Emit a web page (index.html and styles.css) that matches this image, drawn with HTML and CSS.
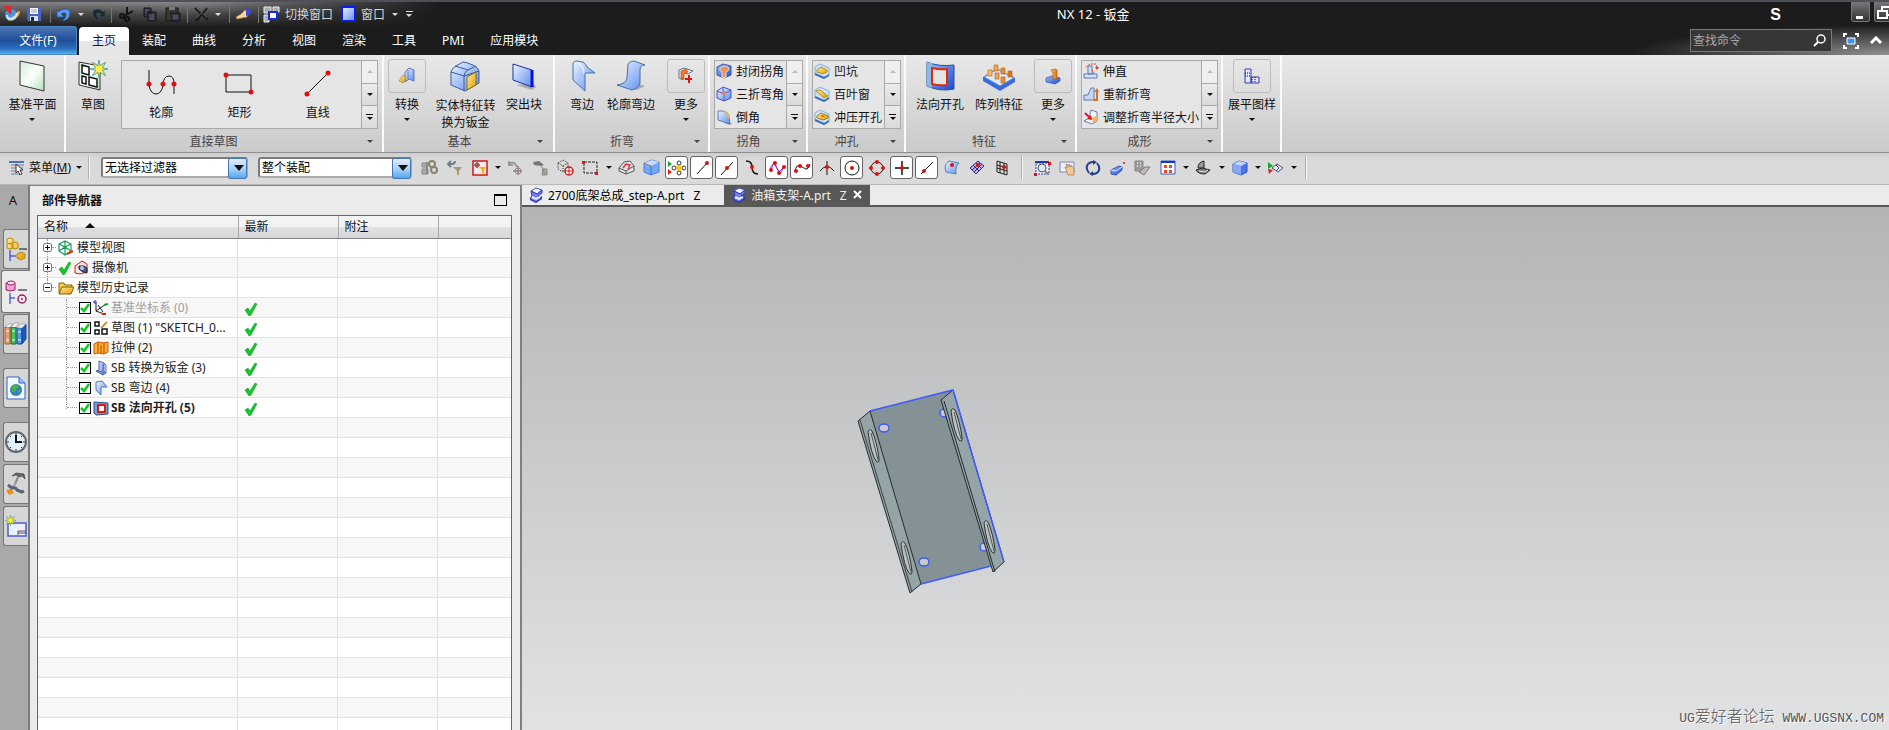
FILE: index.html
```html
<!DOCTYPE html>
<html lang="zh-CN">
<head>
  <meta charset="UTF-8">
  <meta name="viewport" content="width=device-width, initial-scale=1.0">
  <title>NX 12 - 钣金</title>
  <link rel="stylesheet" href="styles.css">
</head>
<body>
  <!-- shared gradients and symbols -->
  <svg class="defs" width="0" height="0" aria-hidden="true">
    <defs>
      <linearGradient id="blue" x1="0" y1="0" x2="1" y2="1"><stop offset="0" stop-color="#eef5ff"/><stop offset="1" stop-color="#5b8cf0"/></linearGradient>
      <linearGradient id="deep" x1="0" y1="0" x2="1" y2="1"><stop offset="0" stop-color="#9cc0ff"/><stop offset="1" stop-color="#1f49c8"/></linearGradient>
      <linearGradient id="gold" x1="0" y1="0" x2="1" y2="1"><stop offset="0" stop-color="#fff0a0"/><stop offset="1" stop-color="#e59a00"/></linearGradient>
      <linearGradient id="orange" x1="0" y1="0" x2="1" y2="0"><stop offset="0" stop-color="#ffc46a"/><stop offset="1" stop-color="#d9720c"/></linearGradient>
      <linearGradient id="pale" x1="0" y1="0" x2="1" y2="1"><stop offset="0" stop-color="#d3ecd8"/><stop offset=".5" stop-color="#fbfffb"/><stop offset="1" stop-color="#b5dfbd"/></linearGradient>
      <symbol id="check" viewBox="0 0 14 14"><path d="M1 8l3-2 2 3 5-8 2 1-6 11-2 1z" fill="#16c22c" stroke="#0b9a1d" stroke-width=".5"/></symbol>
      <symbol id="part" viewBox="0 0 16 16"><path d="M2 10l6 3 6-4v3l-6 4-6-3z" fill="#2b35b4"/><path d="M3 4l5-3 6 2-5 4z" fill="#f2f4ff" stroke="#4a55e0"/><path d="M3 4l6 3 5-4v3l-4 3 3 2-5 4-6-3 2-3z" fill="#7583ea" stroke="#3138c0"/><path d="M4 10l4 2 4-2" fill="none" stroke="#e6eaff" stroke-width="2"/></symbol>
      <symbol id="star" viewBox="0 0 16 16"><path d="M8 0l1 5 5-3-3 5 5 1-5 1 3 5-5-3-1 5-1-5-5 3 3-5-5-1 5-1-3-5 5 3z" fill="#ffef3c" stroke="#3b8fa8" stroke-width=".7"/></symbol>
    </defs>
  </svg>

  <header class="titlebar">
    <div class="quick-access">
      <button class="qa" aria-label="NX"><svg width="17" height="17" viewBox="0 0 17 17"><circle cx="8" cy="9" r="6" fill="#3f9be8"/><path d="M5 13q9 0 11-8" fill="none" stroke="#f59c1a" stroke-width="3"/><path d="M4 9q0 4 4 4 5-1 6-6" fill="none" stroke="#d6efff" stroke-width="2"/><path d="M1 0h8l-1 9-3-3z" fill="#e3262c"/></svg></button>
      <button class="qa qa-save" aria-label="保存"><svg width="15" height="15" viewBox="0 0 15 15"><path d="M0 1h14v13H1l-1-1z" fill="#4a62c0"/><path d="M3 1h8v6H3z" fill="#fff"/><path d="M4 3h6M4 5h6" stroke="#99a"/><path d="M3 9h8v5H3z" fill="#d8deee"/><path d="M4 10h3v4H4z" fill="#224"/></svg></button>
      <i class="qa-sep"></i>
      <button class="qa" aria-label="撤销"><svg width="16" height="15" viewBox="0 0 16 15"><path d="M1 3v7h7L5 7q5-3 5 1 0 3-4 6 8-1 8-8 0-4-5-4-4 0-6 3z" fill="#5b9cf0" stroke="#1d4c9e" stroke-width=".7"/></svg></button>
      <button class="drop light" aria-label="撤销列表"></button>
      <button class="qa" aria-label="重做"><svg width="15" height="15" viewBox="0 0 16 15"><path d="M15 3v7H8l3-3Q6 4 6 8q0 3 4 6-8-1-8-8 0-4 5-4 4 0 6 3z" fill="#182830" stroke="#3c4c54" stroke-width=".7"/></svg></button>
      <i class="qa-sep"></i>
      <button class="qa qa-wide" aria-label="剪切"><svg width="15" height="15" viewBox="0 0 15 15"><path d="M8 0v7M14 4L5 9" stroke="#141414" stroke-width="2"/><circle cx="3" cy="9" r="2" fill="none" stroke="#111" stroke-width="2"/><circle cx="8" cy="12" r="2" fill="none" stroke="#111" stroke-width="2"/></svg></button>
      <button class="qa qa-wide" aria-label="复制"><svg width="14" height="15" viewBox="0 0 14 15"><path d="M1 1h7v9H1zM5 5h8v9H5z" fill="#34343f" stroke="#141420"/><path d="M2 3h4M2 5h2M6 8h5M6 10h5M6 12h5" stroke="#66667a"/></svg></button>
      <button class="qa qa-wide" aria-label="粘贴"><svg width="16" height="15" viewBox="0 0 16 15"><path d="M1 1h12v13H1z" fill="#3a372e" stroke="#15140f"/><path d="M4 0h6v3H4z" fill="#777"/><path d="M6 6h9v8H6z" fill="#34343f" stroke="#141420"/><path d="M8 9h5M8 11h5" stroke="#66667a"/></svg></button>
      <i class="qa-sep"></i>
      <button class="qa" aria-label="删除"><svg width="15" height="15" viewBox="0 0 15 15"><path d="M1 1l13 12M13 1L2 14" stroke="#151515" stroke-width="2"/><path d="M2 1l11 10M12 1L3 11" stroke="#666" stroke-width=".7"/></svg></button>
      <button class="drop light" aria-label="删除选项"></button>
      <i class="qa-sep roomy"></i>
      <button class="qa" aria-label="触控模式"><svg width="16" height="12" viewBox="0 0 16 12"><path d="M0 9l5-3 4-4 4 2-2 5-5 1-5 1z" fill="#f5d5a5" stroke="#a9702c" stroke-width=".6"/><path d="M10 0l5 2-1 5-4 1z" fill="#4048d0"/></svg></button>
      <i class="qa-sep roomy"></i>
      <button class="qa-text"><svg width="17" height="17" viewBox="0 0 17 17"><path d="M1 1h7v6H1zM10 1h6v5h-6zM1 9h5v7H1z" fill="#aaa" stroke="#eee"/><path d="M6 6h8v7H6z" fill="#fff" stroke="#1626ea" stroke-width="2"/></svg>切换窗口</button>
      <button class="qa-text"><svg width="15" height="16" viewBox="0 0 15 16"><path d="M1 1h13v14H1z" fill="url(#blue)" stroke="#0a1cf0" stroke-width="2"/></svg>窗口</button>
      <button class="drop light" aria-label="窗口列表"></button>
      <button class="drop bar light" aria-label="自定义工具条"></button>
    </div>
    <h1>NX 12 - 钣金</h1>
    <strong class="badge-s">S</strong>
    <div class="win-buttons">
      <button aria-label="最小化"><svg width="18" height="18" viewBox="0 0 18 18"><path d="M4 13h7v3H4z" fill="#fff"/></svg></button>
      <button aria-label="还原"><svg width="18" height="18" viewBox="0 0 18 18"><path d="M7 8V4h8v8h-3M3 8h9v7H3z" fill="none" stroke="#fff" stroke-width="2"/></svg></button>
    </div>
  </header>

  <nav class="tabs">
    <a href="#" class="file-tab">文件(F)</a>
    <a href="#" class="tab active">主页</a>
    <a href="#" class="tab">装配</a>
    <a href="#" class="tab">曲线</a>
    <a href="#" class="tab">分析</a>
    <a href="#" class="tab">视图</a>
    <a href="#" class="tab">渲染</a>
    <a href="#" class="tab">工具</a>
    <a href="#" class="tab">PMI</a>
    <a href="#" class="tab">应用模块</a>
    <div class="tab-tools">
      <label class="search">
        <input type="text" placeholder="查找命令" aria-label="查找命令">
        <svg width="13" height="13" viewBox="0 0 13 13"><circle cx="8" cy="5" r="4" fill="none" stroke="#fff" stroke-width="1.5"/><path d="M5 8l-4 4" stroke="#fff" stroke-width="2"/></svg>
      </label>
      <button aria-label="全屏"><svg width="16" height="16" viewBox="0 0 16 16"><path d="M1 4V1h3M12 1h3v3M15 12v3h-3M4 15H1v-3" fill="none" stroke="#fff" stroke-width="2"/><path d="M4 5h8v6H4z" fill="#3f92ee" stroke="#fff"/></svg></button>
      <button aria-label="最小化功能区"><svg width="13" height="9" viewBox="0 0 13 9"><path d="M1 7l5-5 5 5" fill="none" stroke="#fff" stroke-width="3"/></svg></button>
    </div>
  </nav>

  <section class="ribbon">
    <div class="group g-datum">
      <div class="group-body">
        <button class="big"><svg width="32" height="32" viewBox="0 0 32 32"><path d="M4 1l24 5v25L4 25z" fill="url(#pale)" stroke="#333"/></svg>基准平面<i class="caret"></i></button>
      </div>
    </div>

    <div class="group g-sketch">
      <div class="group-body">
        <button class="big"><svg width="32" height="32" viewBox="0 0 32 32"><path d="M2 2l21 4v24L2 25z" fill="url(#pale)" stroke="#333"/><path d="M5 5l7 2v8l-7-2zM5 16l4 1v7l-4-1zM12 17l8 2v8l-8-2z" fill="#fff" stroke="#111" stroke-width="1.5"/><use href="#star" x="13" y="0" width="18" height="18"/></svg>草图</button>
        <div class="gallery wide">
          <div class="gallery-items">
            <button class="shape"><svg width="32" height="28" viewBox="0 0 32 28"><path d="M4 1v16q2 8 7 8t7-8q0-10 6-10 5 0 5 8v10" fill="none" stroke="#111"/><g fill="#e01010"><circle cx="4" cy="15" r="2.5"/><circle cx="18" cy="15" r="2.5"/><circle cx="29" cy="15" r="2.5"/></g></svg>轮廓</button>
            <button class="shape"><svg width="32" height="28" viewBox="0 0 32 28"><path d="M3 6h25v17H3z" fill="none" stroke="#111"/><g fill="#e01010"><circle cx="3" cy="6" r="2.5"/><circle cx="28" cy="23" r="2.5"/></g></svg>矩形</button>
            <button class="shape"><svg width="32" height="28" viewBox="0 0 32 28"><path d="M5 25L26 4" stroke="#111"/><g fill="#e01010"><circle cx="5" cy="25" r="2.5"/><circle cx="26" cy="4" r="2.5"/></g></svg>直线</button>
          </div>
          <div class="scroller"><button class="up" aria-label="上一行" disabled></button><button class="down" aria-label="下一行"></button><button class="down bar" aria-label="更多曲线"></button></div>
        </div>
      </div>
      <footer>直接草图<i class="caret"></i></footer>
    </div>

    <div class="group g-basic">
      <div class="group-body">
        <button class="big"><span class="frame"><svg width="18" height="18" viewBox="0 0 18 18"><path d="M7 5l4-4 5 2v11l-5-2-4 3z" fill="url(#blue)" stroke="#6074b8"/><path d="M10 3v9" stroke="#6074b8"/><path d="M1 14l4-6 3 3-3 5z" fill="url(#gold)" stroke="#9a7820" stroke-width=".6"/></svg></span>转换<i class="caret"></i></button>
        <button class="big two-line"><svg width="32" height="32" viewBox="0 0 32 32"><path d="M2 11q1-4 5-6l7-4q3 0 10 3 5 2 6 6v12l-14 8-14-6z" fill="url(#blue)" stroke="#3d5e96"/><path d="M2 11l13 4 15-5M15 15v15M6 5l13 4q-4 2-4 6M19 9l8-4" fill="none" stroke="#3d5e96"/><path d="M18 16l9-5v13l-9 5z" fill="url(#gold)" stroke="#8a6a10"/></svg>实体特征转<br>换为钣金</button>
        <button class="big"><svg width="32" height="32" viewBox="0 0 32 32"><path d="M8 25l16 5 4-3-3-4z" fill="#aaa"/><path d="M5 4l19 6v17L5 20z" fill="url(#blue)" stroke="#1530b0"/><path d="M24 10v17" stroke="#0510e0" stroke-width="3"/></svg>突出块</button>
      </div>
      <footer>基本<i class="caret"></i></footer>
    </div>

    <div class="group g-bend">
      <div class="group-body">
        <button class="big"><svg width="32" height="32" viewBox="0 0 32 32"><path d="M7 3q1-2 4-2l6 1q3 2 4 5l8 6H19v18L7 20z" fill="url(#blue)" stroke="#3f74a8"/><path d="M18 14q0-8-6-11" fill="none" stroke="#fff"/></svg>弯边</button>
        <button class="big"><svg width="32" height="32" viewBox="0 0 32 32"><path d="M8 26l14 4 8-4-6-2z" fill="#aaa"/><path d="M13 4q2-3 6-3l11 4q-5 0-5 5v13q-1 5-8 7L2 25q9-1 10-7z" fill="url(#blue)" stroke="#3f74a8"/></svg>轮廓弯边</button>
        <button class="big"><span class="frame"><svg width="18" height="18" viewBox="0 0 18 18"><path d="M2 8V3l5-2 9 3-5 3-5-2v8l-4-2z" fill="#f6ede8" stroke="#5c7690"/><path d="M4 4l5-2 2 3-4 2v5H4z" fill="#f47a28" stroke="#b7400a" stroke-width=".6"/><path d="M8 12h7M12 8v8" stroke="#e01010" stroke-width="2"/></svg></span>更多<i class="caret"></i></button>
      </div>
      <footer>折弯<i class="caret"></i></footer>
    </div>

    <div class="group g-list">
      <div class="group-body">
        <div class="gallery">
          <div class="gallery-items">
            <button class="row"><svg width="16" height="16" viewBox="0 0 16 16"><path d="M1 4l6-3 8 2v9l-7 3-7-3z" fill="url(#deep)" stroke="#3358b0"/><path d="M6 15V9Q3 8 4 5l4-2q5 0 5 3 0 2-3 3v5z" fill="#f0935a" stroke="#d8d8e8"/></svg>封闭拐角</button>
            <button class="row"><svg width="16" height="16" viewBox="0 0 16 16"><path d="M1 5l6-4 8 3v8l-7 3-7-3z" fill="url(#blue)" stroke="#4a50c0"/><path d="M1 5l7 3 7-4M8 8v7M7 1v7" stroke="#5a5ad0" fill="none"/><circle cx="8" cy="7" r="2" fill="#f5804a"/></svg>三折弯角</button>
            <button class="row"><svg width="16" height="16" viewBox="0 0 16 16"><path d="M8 14l6 2 2-2z" fill="#999"/><path d="M2 2q9-1 11 5l1 8-12-4z" fill="url(#blue)" stroke="#5878c0"/><path d="M8 2q5 2 5 8" fill="none" stroke="#e3b54a" stroke-width="1.5"/></svg>倒角</button>
          </div>
          <div class="scroller"><button class="up" aria-label="上一行" disabled></button><button class="down" aria-label="下一行"></button><button class="down bar" aria-label="更多拐角"></button></div>
        </div>
      </div>
      <footer>拐角<i class="caret"></i></footer>
    </div>

    <div class="group g-list">
      <div class="group-body">
        <div class="gallery">
          <div class="gallery-items">
            <button class="row"><svg width="16" height="16" viewBox="0 0 16 16"><path d="M1 4l5-3 9 4v7l-5 3-9-4z" fill="#cfe4f8" stroke="#7fb4e0"/><path d="M1 11l9 4 5-3" fill="none" stroke="#3a6fc0" stroke-width="2"/><path d="M3 7l4-3 6 3v2l-4 2-6-2z" fill="url(#gold)" stroke="#b98f10"/></svg>凹坑</button>
            <button class="row"><svg width="16" height="16" viewBox="0 0 16 16"><path d="M1 4l5-3 9 4v7l-5 3-9-4z" fill="#cfe4f8" stroke="#7fb4e0"/><path d="M1 11l9 4 5-3" fill="none" stroke="#3a6fc0" stroke-width="2"/><path d="M2 5l4-1 8 6-4 2z" fill="url(#gold)" stroke="#b98f10"/></svg>百叶窗</button>
            <button class="row"><svg width="16" height="16" viewBox="0 0 16 16"><path d="M1 4l5-3 9 4v7l-5 3-9-4z" fill="#cfe4f8" stroke="#7fb4e0"/><path d="M1 11l9 4 5-3" fill="none" stroke="#3a6fc0" stroke-width="2"/><path d="M3 7l4-3 7 3v2l-5 2-6-2z" fill="url(#gold)" stroke="#a8780c"/><path d="M6 7l2-1 3 1-2 1z" fill="#b0740c"/></svg>冲压开孔</button>
          </div>
          <div class="scroller"><button class="up" aria-label="上一行" disabled></button><button class="down" aria-label="下一行"></button><button class="down bar" aria-label="更多冲孔"></button></div>
        </div>
      </div>
      <footer>冲孔<i class="caret"></i></footer>
    </div>

    <div class="group g-feature">
      <div class="group-body">
        <button class="big"><svg width="32" height="32" viewBox="0 0 32 32"><path d="M3 2q12 5 27 3v24q-14 3-27-3z" fill="url(#deep)" stroke="#1c5294"/><path d="M3 2q3 1 5 1v25l-5-2z" fill="#8fb8e4"/><path d="M8 8q8 2 15 1v16q-8 1-15-1z" fill="#e3e3e3" stroke="#e02a10" stroke-width="2"/></svg>法向开孔</button>
        <button class="big"><svg width="32" height="32" viewBox="0 0 32 32"><path d="M0 17l14-8 18 9v4L17 31 0 21z" fill="#3a6bd8"/><path d="M1 17l13-8 17 9-14 8z" fill="#dbe8fd" stroke="#5580d8"/><g fill="url(#orange)" stroke="#b85a08" stroke-width=".6"><path d="M11 5h4v6h-4zM18 8h4v6h-4zM25 11h4v6h-4zM5 10h4v6H5zM12 13h4v6h-4zM18 17h4v6h-4z"/></g></svg>阵列特征</button>
        <button class="big"><span class="frame"><svg width="18" height="18" viewBox="0 0 18 18"><path d="M2 11l6-2 8 2v3l-5 3-9-2z" fill="url(#deep)" stroke="#2f55a0" stroke-width=".7"/><path d="M7 3l4-1 2 1v9H9V6z" fill="url(#orange)" stroke="#c05a08" stroke-width=".7"/></svg></span>更多<i class="caret"></i></button>
      </div>
      <footer>特征<i class="caret"></i></footer>
    </div>

    <div class="group g-form">
      <div class="group-body">
        <div class="gallery">
          <div class="gallery-items">
            <button class="row"><svg width="16" height="16" viewBox="0 0 16 16"><path d="M1 11h13v4H1zM5 3h4v8H5z" fill="#d5e0f4" stroke="#5a7ab0"/><path d="M11 11l-2-4M3 4l4-3h5q2 0 2 4" fill="none" stroke="#e23a18" stroke-dasharray="2 1"/><path d="M12 4h4l-2 3z" fill="#e23a18"/></svg>伸直</button>
            <button class="row"><svg width="16" height="16" viewBox="0 0 16 16"><path d="M1 9h4l3-7h3v12H1z" fill="#c8d8f2" stroke="#5a7ab0"/><path d="M14 15V5" stroke="#e0701a" stroke-width="2"/><path d="M11 6h5l-2-4zM11 13h4v2h-4z" fill="#e0701a"/></svg>重新折弯</button>
            <button class="row"><svg width="16" height="16" viewBox="0 0 16 16"><path d="M8 1l6 2v9l-5 3-8-3 5-3z" fill="#eef2fa" stroke="#6a80a8"/><path d="M9 9l4-2 2 4-5 3z" fill="#f8b35a"/><path d="M2 4l6 6" stroke="#e01818" stroke-width="2"/><path d="M9 11l-5-1 4-4z" fill="#e01818"/></svg>调整折弯半径大小</button>
          </div>
          <div class="scroller"><button class="up" aria-label="上一行" disabled></button><button class="down" aria-label="下一行"></button><button class="down bar" aria-label="更多成形"></button></div>
        </div>
      </div>
      <footer>成形<i class="caret"></i></footer>
    </div>

    <div class="group g-flat">
      <div class="group-body">
        <button class="big"><span class="frame"><svg width="18" height="18" viewBox="0 0 18 18"><path d="M2 2h6v14H2zM8 10h8v6H8z" fill="#e0e4f4" stroke="#3c3cae"/><path d="M2 6h6M2 9h6M9 10v6M12 10v6" stroke="#111" stroke-dasharray="1 1"/></svg></span>展平图样<i class="caret"></i></button>
      </div>
    </div>
  </section>

  <section class="toolbar">
    <button class="menu-button"><svg width="16" height="14" viewBox="0 0 16 14"><path d="M0 1h15" stroke="#4870c8" stroke-width="2"/><path d="M2 4h13M2 7h12M2 10h9M2 13h9" stroke="#6d7e9c"/><path d="M7 3l7 6h-3l2 4-2 1-2-4-2 2z" fill="#fff" stroke="#333"/></svg>菜单(<u>M</u>)<i class="caret"></i></button>
    <i class="tool-sep"></i>
    <span class="combo c-filter"><select aria-label="选择过滤器"><option>无选择过滤器</option></select></span>
    <span class="combo c-scope"><select aria-label="选择范围"><option>整个装配</option></select></span>

    <button class="tool" aria-label="查找"><svg width="17" height="16" viewBox="0 0 17 16"><path d="M1 3h5v4H1zM1 9h6v5H1z" fill="#aaa" stroke="#888"/><path d="M6 2v12" stroke="#888" stroke-width="2"/><circle cx="11" cy="4" r="3" fill="none" stroke="#8a8468" stroke-width="2"/><circle cx="13" cy="10" r="3" fill="none" stroke="#8a8468" stroke-width="2"/></svg></button>
    <button class="tool" aria-label="重置过滤器"><svg width="17" height="16" viewBox="0 0 17 16"><path d="M2 4h4q3 0 3-3M5 1L2 4l3 3" fill="none" stroke="#70808a" stroke-width="2"/><path d="M7 7h9l-3 4v4h-2v-4z" fill="#a89c78"/></svg></button>
    <button class="tool" aria-label="详细过滤"><svg width="16" height="16" viewBox="0 0 16 16"><path d="M1 1h14v14H1z" fill="#f3e9e9" stroke="#d01818" stroke-width="1.5"/><path d="M5 2v6M2 5h6" stroke="#444"/><circle cx="5" cy="5" r="2" fill="none" stroke="#c22"/><path d="M7 7h7l-2 3v4l-2-1v-3z" fill="#f0b410"/></svg></button>
    <button class="drop" aria-label="过滤选项"></button>
    <button class="tool" aria-label="上一步"><svg width="17" height="16" viewBox="0 0 17 16"><path d="M2 4q5-4 8 3M2 1v4h4M11 6v9M6 11h9" fill="none" stroke="#888" stroke-width="1.5"/><circle cx="11" cy="11" r="3" fill="none" stroke="#a08080"/></svg></button>
    <button class="tool" aria-label="捕捉"><svg width="17" height="16" viewBox="0 0 17 16"><path d="M1 2l6-1 5 4-3 1-7-1z" fill="#777"/><path d="M9 5l4 9M11 9h4v6h-5z" fill="#aaa89a" stroke="#8a8a80"/></svg></button>
    <button class="tool" aria-label="体选择"><svg width="17" height="17" viewBox="0 0 17 17"><path d="M1 4l5-3 5 3v6l-5 3-5-3zM1 4l5 3 5-3M6 7v6" fill="none" stroke="#333" stroke-dasharray="1 1"/><circle cx="12" cy="12" r="4" fill="#fff" stroke="#d01818" stroke-width="1.5"/><path d="M12 8v8M8 12h8" stroke="#d01818"/></svg></button>
    <button class="tool" aria-label="矩形选择"><svg width="17" height="14" viewBox="0 0 17 14"><path d="M2 1h13v11H2z" fill="none" stroke="#222" stroke-dasharray="3 1"/><path d="M0 0h3v3H0zM13 11h3v3h-3z" fill="#e01818"/></svg></button>
    <button class="drop" aria-label="矩形选项"></button>
    <button class="tool" aria-label="面"><svg width="17" height="15" viewBox="0 0 17 15"><path d="M1 8l5-6 6-1 4 5v5l-8 3-7-3z" fill="#dfe4ee" stroke="#555"/><path d="M1 8l7 3 8-5M8 11v3" fill="none" stroke="#555"/><path d="M5 8l3-4 4 1-2 4" fill="none" stroke="#d33" stroke-width="1.5"/></svg></button>
    <button class="tool" aria-label="实体"><svg width="17" height="17" viewBox="0 0 17 17"><path d="M1 4l8-3 7 2v10l-8 3-7-3z" fill="#74a8f4" stroke="#4a7cd8"/><path d="M1 4l7 3 8-4-7-2z" fill="#c7dcff"/><path d="M8 7v9" stroke="#3e6ed0"/><path d="M1 4l7 3" stroke="#e06060"/></svg></button>
    <button class="tool boxed" aria-label="启用捕捉点"><svg width="18" height="18" viewBox="0 0 18 18"><path d="M0 2l4 3-4 3z" fill="#19a52b"/><path d="M0 10l4 3-4 3z" fill="#e02020"/><path d="M11 2v14M4 9h14" stroke="#444"/><g fill="#fff" stroke="#333"><circle cx="11" cy="4" r="2"/><circle cx="11" cy="14" r="2"/><circle cx="6" cy="9" r="2"/><circle cx="16" cy="9" r="2"/></g><circle cx="11" cy="9" r="3" fill="#f5c71a"/></svg></button>
    <button class="tool boxed" aria-label="端点"><svg width="16" height="16" viewBox="0 0 16 16"><path d="M3 14L13 3" stroke="#111"/><circle cx="13" cy="3" r="2" fill="#e01010"/></svg></button>
    <button class="tool boxed" aria-label="中点"><svg width="16" height="16" viewBox="0 0 16 16"><path d="M2 15L14 2" stroke="#111"/><circle cx="8" cy="8" r="2" fill="#e01010"/></svg></button>
    <button class="tool" aria-label="控制点"><svg width="16" height="16" viewBox="0 0 16 16"><path d="M2 1q6 0 6 6 0 7 6 7" fill="none" stroke="#111" stroke-width="1.5"/><circle cx="8" cy="7" r="2" fill="#e01010"/></svg></button>
    <button class="tool boxed" aria-label="极点"><svg width="18" height="16" viewBox="0 0 18 16"><path d="M2 10q2-8 5-5l4 7 5-5M3 10L6 2l6 12 4-7" fill="none" stroke="#9a35c8"/><g fill="#e01010"><circle cx="3" cy="10" r="2"/><circle cx="7" cy="3" r="2"/><circle cx="11" cy="13" r="2"/><circle cx="16" cy="7" r="2"/></g></svg></button>
    <button class="tool boxed" aria-label="样条点"><svg width="18" height="16" viewBox="0 0 18 16"><path d="M2 12Q3 4 7 6t6 3 4-5" fill="none" stroke="#111"/><g fill="#e01010"><circle cx="3" cy="11" r="2"/><circle cx="7" cy="6" r="2"/><circle cx="15" cy="6" r="2"/></g></svg></button>
    <button class="tool" aria-label="交点"><svg width="16" height="16" viewBox="0 0 16 16"><path d="M1 11q7-9 14 0M8 1v14" fill="none" stroke="#111"/><circle cx="8" cy="7" r="2" fill="#e01010"/></svg></button>
    <button class="tool boxed" aria-label="圆心"><svg width="16" height="16" viewBox="0 0 16 16"><circle cx="8" cy="8" r="7" fill="none" stroke="#111"/><circle cx="8" cy="8" r="2" fill="#e01010"/></svg></button>
    <button class="tool" aria-label="象限点"><svg width="16" height="16" viewBox="0 0 16 16"><circle cx="8" cy="8" r="6" fill="none" stroke="#111"/><g fill="#e01010"><circle cx="8" cy="2" r="2"/><circle cx="8" cy="14" r="2"/><circle cx="2" cy="8" r="2"/><circle cx="14" cy="8" r="2"/></g></svg></button>
    <button class="tool boxed" aria-label="现有点"><svg width="16" height="16" viewBox="0 0 16 16"><path d="M8 1v14M1 8h14" stroke="#111" stroke-width="1.5"/><circle cx="8" cy="8" r="2" fill="#e01010"/></svg></button>
    <button class="tool boxed" aria-label="曲线上的点"><svg width="16" height="16" viewBox="0 0 16 16"><path d="M2 14L14 2" stroke="#111"/><circle cx="5" cy="11" r="2" fill="#e01010"/></svg></button>
    <button class="tool" aria-label="面上的点"><svg width="16" height="16" viewBox="0 0 16 16"><path d="M5 1l10 2q-4 3-3 11L2 12Q-1 5 5 1z" fill="url(#blue)" stroke="#4a88c0"/><circle cx="8" cy="5" r="2" fill="#e01010"/></svg></button>
    <button class="tool" aria-label="小平面顶点"><svg width="16" height="15" viewBox="0 0 16 15"><path d="M1 8l8-7 6 5-8 8zM4 5l6 6M7 3l6 6M3 10l8-7M5 12l8-8" fill="#b9b0ea" stroke="#38308a"/><circle cx="9" cy="5" r="2" fill="#e01010"/></svg></button>
    <button class="tool" aria-label="栅格点"><svg width="16" height="16" viewBox="0 0 16 16"><path d="M3 1l10 3v11L3 12zM6 2v11M10 3v11M3 5l10 3M3 8l10 3" fill="none" stroke="#222"/><circle cx="10" cy="7" r="2" fill="#e01010"/></svg></button>
    <i class="tool-sep view-sep"></i>

    <button class="tool" aria-label="适合窗口"><svg width="17" height="16" viewBox="0 0 17 16"><path d="M2 3h13v11H2z" fill="#eef" stroke="#2238c0" stroke-dasharray="2 1"/><path d="M1 1h14v2H1z" fill="#1738c8"/><circle cx="8" cy="8" r="4" fill="#dde9f5" stroke="#555"/><path d="M11 11l3 3" stroke="#a98020" stroke-width="2"/><path d="M0 13h3v3H0zM14 2h3v3h-3z" fill="#e01010"/></svg></button>
    <button class="tool" aria-label="平移"><svg width="17" height="16" viewBox="0 0 17 16"><path d="M1 2h14v10H1z" fill="#e8f0ff" stroke="#7a86b8"/><path d="M6 7l2 1-1-4h1l2 3V4l2 3V5l3 4v6H9z" fill="#f0c890" stroke="#a97a40" stroke-width=".7"/></svg></button>
    <button class="tool" aria-label="旋转"><svg width="16" height="16" viewBox="0 0 16 16"><path d="M4 13Q0 8 3 4q2-2 5-2M12 3q4 5 1 9-2 2-5 2" fill="none" stroke="#27408c" stroke-width="2"/><path d="M8 0l4 2-4 3zM8 11v5l-4-2z" fill="#27408c"/></svg></button>
    <button class="tool" aria-label="透视"><svg width="16" height="16" viewBox="0 0 16 16"><path d="M1 10l8-4 3 1v3l-6 5-5-1z" fill="url(#deep)" stroke="#3550c0"/><path d="M1 10l5 1 6-4" fill="none" stroke="#dce6ff"/><circle cx="14" cy="3" r="1" fill="#e01010"/></svg></button>
    <button class="tool" aria-label="编辑截面"><svg width="17" height="16" viewBox="0 0 17 16"><path d="M1 1h8v10H1z" fill="#999" stroke="#888"/><path d="M3 3h1M6 3h1M3 6h1M6 6h1" stroke="#ddd" stroke-width="2"/><path d="M5 12l6-5h5l-6 8z" fill="#bbb" stroke="#867676"/></svg></button>
    <button class="tool" aria-label="视图布局"><svg width="16" height="15" viewBox="0 0 16 15"><path d="M1 1h14v13H1z" fill="#fff" stroke="#3c58c8"/><path d="M1 1h14v2H1z" fill="#1738c8"/><path d="M4 5h3v3H4zM9 5h3v3H9zM4 10h3v3H4zM9 10h3v3H9z" fill="#e84830"/></svg></button>
    <button class="drop" aria-label="布局选项"></button>
    <button class="tool" aria-label="渲染样式"><svg width="17" height="15" viewBox="0 0 17 15"><path d="M3 8q0-6 6-7v7z" fill="#9a9a9a" stroke="#222"/><path d="M1 10l6-2 8 2-5 4q-7 0-9-4z" fill="#7c7c7c" stroke="#222"/><path d="M4 11l6 1 3-2" fill="none" stroke="#eee"/></svg></button>
    <button class="drop" aria-label="渲染选项"></button>
    <button class="tool" aria-label="定向视图"><svg width="16" height="16" viewBox="0 0 16 16"><path d="M1 4l6-3 8 2v9l-6 3-8-3z" fill="#4b74e4" stroke="#2c50c0"/><path d="M1 4l6-3 8 2-6 3z" fill="#c2d4ff"/><path d="M1 4l8 2v9l-8-3z" fill="#86a8f8"/></svg></button>
    <button class="drop" aria-label="视图选项"></button>
    <button class="tool" aria-label="显示隐藏"><svg width="18" height="14" viewBox="0 0 18 14"><path d="M1 1l5 4-5 3z" fill="#18a52b"/><path d="M1 8l5 1-4 4z" fill="#e02020"/><path d="M5 7l5-4 6 4-5 4z" fill="#e5eaf2" stroke="#556"/><path d="M9 4l3 3-3 3" fill="none" stroke="#2850b0"/></svg></button>
    <button class="drop" aria-label="显示选项"></button>
    <i class="tool-sep"></i>
  </section>

  <main class="workspace">
    <aside class="rail">
      <span class="rail-label">A</span>
      <button aria-label="装配导航器"><svg width="22" height="26" viewBox="0 0 22 26"><g fill="url(#gold)" stroke="#b8860b"><path d="M2 3l3-1 3 1v4l-3 1-3-1zM2 8l3-1 3 1v4l-3 1-3-1zM7 7l3-1 3 1v5l-3 1-3-1zM12 18l4-2 4 2v4l-4 2-4-2z"/></g><path d="M14 13h8" stroke="#111"/><path d="M5 14v11M5 20h6" stroke="#1226c0"/></svg></button>
      <button class="current" aria-label="部件导航器"><svg width="22" height="26" viewBox="0 0 22 26"><path d="M1 4v7q4 2 9 0V4z" fill="#e8a6d0" stroke="#9a2068"/><ellipse cx="6" cy="4" rx="4" ry="2" fill="#f8d8ec" stroke="#9a2068"/><path d="M13 11h9" stroke="#111"/><path d="M5 14v11M5 19h5" stroke="#1226c0"/><circle cx="17" cy="20" r="4" fill="none" stroke="#9a2068" stroke-width="1.5"/><circle cx="17" cy="20" r="1" fill="#9a2068"/></svg></button>
      <button aria-label="重用库"><svg width="24" height="24" viewBox="0 0 24 24"><path d="M1 5h5v17H1z" fill="#e8a070" stroke="#b8501c"/><path d="M7 5h5v17H7z" fill="#46c45c" stroke="#146a24"/><path d="M13 6h5v16h-5z" fill="#4c9cf0" stroke="#144a98"/><path d="M18 6l4-4v15l-4 5z" fill="#1c5cb8" stroke="#144a98"/><path d="M1 5l4-3h4L6 5M7 5l4-4h4l-3 4M13 6l4-4h5l-4 4z" fill="#f4f4f4" stroke="#888" stroke-width=".6"/><path d="M2 9h3M2 18h3M8 9h3M8 18h3M14 10h3M14 18h3" stroke="#fff"/></svg></button>
      <button class="gap" aria-label="网页浏览器"><svg width="20" height="24" viewBox="0 0 20 24"><path d="M1 1h12l6 6v16H1z" fill="#f4faff" stroke="#2e66c0"/><path d="M13 1v6h6" fill="#9fc2f2" stroke="#2e66c0"/><circle cx="10" cy="14" r="6" fill="#3a7cc8"/><path d="M6 10l5-2 2 3-3 2-1 4-3-2zM12 15l3-2-2 5z" fill="#46b24a"/></svg></button>
      <button class="gap" aria-label="历史记录"><svg width="24" height="24" viewBox="0 0 24 24"><circle cx="12" cy="12" r="10" fill="#dfeefa" stroke="#666" stroke-width="2"/><path d="M12 3v2M12 19v2M3 12h2M19 12h2M6 6l1 1M18 6l-1 1M6 18l1-1M18 18l-1-1" stroke="#333"/><path d="M12 5v7h6" fill="none" stroke="#111" stroke-width="2"/></svg></button>
      <button aria-label="加工向导"><svg width="22" height="24" viewBox="0 0 22 24"><path d="M7 4l4-3 8 1 1 5-3-3-3 1-3-2z" fill="#666" stroke="#333" stroke-width=".6"/><path d="M13 5l-3 7" stroke="#888" stroke-width="2"/><path d="M4 20l3-5q3-1 3-4" fill="none" stroke="#9aa2b4" stroke-width="2"/><path d="M3 13l4 3q4-1 5 2l5 2 2-1" fill="none" stroke="#5a6478" stroke-width="3"/><path d="M1 18l5-1 3 4-5 2z" fill="#f08c18"/></svg></button>
      <button aria-label="角色"><svg width="22" height="24" viewBox="0 0 22 24"><path d="M3 9h18v13H3z" fill="#eef0ff" stroke="#4a60c8" stroke-width="1.5"/><path d="M13 17h8M13 17v4M13 19h8" fill="none" stroke="#555"/><use href="#star" x="0" y="1" width="11" height="11"/></svg></button>
    </aside>

    <section class="navigator">
      <div class="nav-title">
        <h2>部件导航器</h2>
        <button aria-label="最大化"></button>
      </div>
      <div class="tree-box">
        <table class="tree">
          <colgroup><col class="col-name"><col class="col-state"><col class="col-state"><col></colgroup>
          <thead>
            <tr><th>名称<i class="sort"></i></th><th>最新</th><th>附注</th><th></th></tr>
          </thead>
          <tbody>
            <tr>
              <td><div class="node"><button class="toggle plus" aria-label="展开"></button><i class="link"></i><svg width="16" height="16" viewBox="0 0 16 16"><path d="M1 4l6-3 6 3v7l-6 4-6-4zM1 4l6 3 6-3M7 1v14M1 11l6-4 6 4" fill="none" stroke="#179a58" stroke-width="1.2"/><path d="M9 14l6-3" stroke="#e83018" stroke-width="2"/></svg>模型视图</div></td>
              <td></td><td></td><td></td>
            </tr>
            <tr>
              <td><div class="node"><button class="toggle plus" aria-label="展开"></button><i class="link"></i><svg width="14" height="14"><use href="#check"/></svg><svg width="15" height="15" viewBox="0 0 15 15"><path d="M1 6l7-5 5 3v8l-7 2-5-1z" fill="#f6e4e4" stroke="#d02020"/><path d="M5 6h5l3 2v5l-4-1-4-3z" fill="#555a78" stroke="#223"/><circle cx="8" cy="8" r="2" fill="#b8c4ff"/></svg>摄像机</div></td>
              <td></td><td></td><td></td>
            </tr>
            <tr>
              <td><div class="node last"><button class="toggle" aria-label="折叠"></button><i class="link"></i><svg width="16" height="14" viewBox="0 0 16 14"><path d="M1 12V2h5l1 2h7v3" fill="#f8d048" stroke="#8a6000"/><path d="M1 13l3-7h12l-3 7z" fill="url(#gold)" stroke="#8a6000"/></svg>模型历史记录</div></td>
              <td></td><td></td><td></td>
            </tr>
            <tr>
              <td><div class="node child dim"><i class="link"></i><input type="checkbox" aria-label="基准坐标系" checked><svg width="16" height="16" viewBox="0 0 16 16"><path d="M3 3v8l8 3M3 11l10-7M5 5l5 7" fill="none" stroke="#222"/><path d="M2 0v4M0 2h4" stroke="#2030d0"/><path d="M11 5l4-1" stroke="#18a030" stroke-width="2"/><path d="M9 14h4" stroke="#d02020" stroke-width="2"/></svg>基准坐标系 (0)</div></td>
              <td><svg class="ok" width="14" height="14"><use href="#check"/></svg></td><td></td><td></td>
            </tr>
            <tr>
              <td><div class="node child"><i class="link"></i><input type="checkbox" aria-label="草图" checked><svg width="16" height="16" viewBox="0 0 16 16"><path d="M2 2h4v4H2zM2 10h4v4H2zM9 9h5v5H9z" fill="#fff" stroke="#111" stroke-width="1.5"/><path d="M8 8l6-6" stroke="#d89018" stroke-width="2"/></svg>草图 (1) "SKETCH_0...</div></td>
              <td><svg class="ok" width="14" height="14"><use href="#check"/></svg></td><td></td><td></td>
            </tr>
            <tr>
              <td><div class="node child"><i class="link"></i><input type="checkbox" aria-label="拉伸" checked><svg width="16" height="16" viewBox="0 0 16 16"><path d="M1 4l4-2 6 1 4-1v10l-4 2-6-1-4 1z" fill="#ffb13c" stroke="#c85a00"/><path d="M5 2v11M8 5v8M11 3v11" stroke="#d86400" stroke-width="1.5"/></svg>拉伸 (2)</div></td>
              <td><svg class="ok" width="14" height="14"><use href="#check"/></svg></td><td></td><td></td>
            </tr>
            <tr>
              <td><div class="node child"><i class="link"></i><input type="checkbox" aria-label="转换为钣金" checked><svg width="16" height="16" viewBox="0 0 16 16"><path d="M6 1l5 2v8l2 2-3 2-7-4 3-1z" fill="url(#blue)" stroke="#5560b0"/><path d="M3 11l7 1V4M10 12v3M11 3l2 2v8" fill="none" stroke="#5560b0"/></svg>SB 转换为钣金 (3)</div></td>
              <td><svg class="ok" width="14" height="14"><use href="#check"/></svg></td><td></td><td></td>
            </tr>
            <tr>
              <td><div class="node child"><i class="link"></i><input type="checkbox" aria-label="弯边" checked><svg width="16" height="16" viewBox="0 0 16 16"><path d="M3 2l6-1 5 6H8v8l-5-5z" fill="url(#blue)" stroke="#4a78b8"/></svg>SB 弯边 (4)</div></td>
              <td><svg class="ok" width="14" height="14"><use href="#check"/></svg></td><td></td><td></td>
            </tr>
            <tr>
              <td><div class="node child last bold"><i class="link"></i><input type="checkbox" aria-label="法向开孔" checked><svg width="16" height="16" viewBox="0 0 16 16"><path d="M1 2l14 1v11l-12 1-2-2z" fill="#7aa0d8" stroke="#1c4a90"/><path d="M5 5h7v7H5z" fill="#fff" stroke="#d81c10" stroke-width="2"/></svg>SB 法向开孔 (5)</div></td>
              <td><svg class="ok" width="14" height="14"><use href="#check"/></svg></td><td></td><td></td>
            </tr>
          </tbody>
        </table>
      </div>
    </section>

    <section class="graphics">
      <div class="doc-tabs">
        <a href="#" class="doc"><svg width="16" height="16"><use href="#part"/></svg>2700底架总成_step-A.prt<span class="flag">Z</span></a>
        <a href="#" class="doc open"><svg width="16" height="16"><use href="#part"/></svg>油箱支架-A.prt<span class="flag">Z</span><svg width="10" height="10" viewBox="0 0 10 10"><path d="M1 1l7 7M8 1L1 8" stroke="#fff" stroke-width="2"/></svg></a>
      </div>
      <div class="canvas">
        <svg class="model" width="190" height="240" viewBox="0 0 190 240">
          <path d="M30 41l83-21 51 172-83 22z" fill="#849296"/>
          <g fill="#c9cacc" stroke="#3d5bff" stroke-width="1.5"><ellipse cx="44" cy="58" rx="5" ry="4"/><ellipse cx="84" cy="192" rx="5" ry="4"/><ellipse cx="104" cy="43" rx="4" ry="4"/><ellipse cx="144" cy="177" rx="4" ry="4"/></g>
          <path d="M18 51l12-10 51 173-11 9z" fill="#94a4a7" stroke="#252a2b"/>
          <path d="M20 50l52 172" stroke="#3a4244"/>
          <path d="M101 30l12-10 51 172-11 10z" fill="#94a4a7" stroke="#252a2b"/>
          <path d="M104 31l51 171" stroke="#252a2b"/>
          <path d="M30 41l83-21 51 172M81 214l70-18" fill="none" stroke="#3d5bff" stroke-width="1.5"/>
          <g fill="#b9c1c3" stroke="#2c3233">
            <path d="M28 62q1-4 4-1 5 11 7 28 0 5-3 2-5-7-8-29z"/>
            <path d="M61 174q1-4 4-1 5 11 7 28 0 5-3 2-5-7-8-29z"/>
            <path d="M111 41q1-4 4-1 5 11 7 28 0 5-3 2-5-7-8-29z"/>
            <path d="M144 153q1-4 4-1 5 11 7 28 0 5-3 2-5-7-8-29z"/>
          </g>
          <path d="M31 63l7 27M64 175l7 27M114 42l7 27M147 154l7 27" stroke="#4c5557"/>
        </svg>
        <p class="watermark">UG<span>爱好者论坛</span> WWW.UGSNX.COM</p>
      </div>
    </section>
  </main>
</body>
</html>
```

FILE: styles.css
```css
* {
  box-sizing: border-box;
}

html, body {
  height: 100%;
  margin: 0;
}

body {
  display: flex;
  flex-direction: column;
  overflow: hidden;
  font-family: "Noto Sans", "Noto Sans CJK SC", sans-serif;
  font-size: 12px;
  line-height: 17px;
  color: #111;
  background: #ebebeb;
}

button {
  padding: 0;
  border: 0;
  background: none;
  font: inherit;
  color: inherit;
  cursor: pointer;
}

a {
  color: inherit;
  text-decoration: none;
}

svg {
  flex: none;
  display: block;
}

.defs {
  position: absolute;
}

/* small triangles */
.caret, .drop::after, .scroller button::after {
  content: "";
  width: 0;
  height: 0;
  border: 3px solid transparent;
  border-top-color: currentColor;
  border-bottom: 0;
}

.drop {
  display: flex;
  flex-direction: column;
  align-items: center;
  justify-content: center;
  gap: 2px;
  width: 11px;
  height: 20px;
}

.drop.bar::before, .scroller .bar::before {
  content: "";
  width: 7px;
  height: 1px;
  background: currentColor;
}

.light {
  color: #ddd;
}

/* title bar */
.titlebar {
  display: flex;
  align-items: center;
  height: 26px;
  flex: none;
  border-top: 2px solid #50505a;
  color: #fff;
  background: linear-gradient(90deg, rgba(28, 28, 28, 0) 200px, #1c1c1c 440px), linear-gradient(#858585, #484848 50%, #202020);
}

.quick-access {
  display: flex;
  align-items: center;
  padding-left: 1px;
}

.qa {
  display: flex;
  align-items: center;
  justify-content: center;
  width: 20px;
}

.qa-save {
  width: 26px;
}

.qa-wide {
  width: 23px;
}

.qa-sep {
  width: 1px;
  height: 17px;
  margin: 0 3px;
  background: #777;
}

.qa-sep.roomy {
  margin: 0 4px;
}

.quick-access .drop {
  width: 12px;
  margin: 0 1px;
}

.qa-text {
  display: flex;
  align-items: center;
  gap: 5px;
  margin-right: 8px;
  color: #d4d4d4;
}

.qa-text + .drop {
  margin-left: -4px;
}

.titlebar h1 {
  flex: 1;
  margin: 0;
  font-size: 13px;
  font-weight: 400;
  text-align: center;
}

.badge-s {
  margin-right: 70px;
  font-family: "Liberation Sans", sans-serif;
  font-size: 16px;
}

.win-buttons {
  display: flex;
  gap: 4px;
  height: 100%;
  overflow: hidden;
  width: 38px;
}

.win-buttons button {
  flex: none;
  width: 19px;
  height: 20px;
  border: 1px solid #777;
  border-top: 0;
  border-radius: 0 0 3px 3px;
  background: linear-gradient(#777, #333);
}

/* ribbon tabs */
.tabs {
  display: flex;
  flex: none;
  height: 29px;
  color: #fff;
  background: radial-gradient(ellipse 260px 30px at 100% 100%, #909090, rgba(28, 28, 28, 0)), #1c1c1c;
}

.file-tab {
  width: 77px;
  margin-right: 2px;
  border: 1px solid #4d84c4;
  border-left: 0;
  border-radius: 0 3px 0 0;
  line-height: 27px;
  text-align: center;
  background: linear-gradient(#4c74b4, #1e4f98 50%, #2a6fc0 80%, #52b4ec);
}

.tab {
  padding: 0 13px;
  line-height: 29px;
}

.tab.active {
  margin-top: 1px;
  border-radius: 4px 4px 0 0;
  line-height: 27px;
  color: #14145a;
  background: linear-gradient(#fff 50%, #e6e6e6 50%);
}

.tab-tools {
  display: flex;
  align-items: center;
  gap: 11px;
  margin-left: auto;
  padding-right: 6px;
}

.search {
  display: flex;
  align-items: center;
  width: 142px;
  height: 23px;
  padding: 0 5px 0 2px;
  border: 1px solid #7a7a7a;
  background: #363636;
}

.search input {
  flex: 1;
  min-width: 0;
  padding: 0;
  border: 0;
  outline: 0;
  background: none;
  font: inherit;
  color: #fff;
}

.search input::placeholder {
  color: #a8a8a8;
}

/* ribbon */
.ribbon {
  display: flex;
  flex: none;
  height: 98px;
  border-bottom: 1px solid #8f8f8f;
  background: linear-gradient(#e8e8e8, #cacaca);
}

.group {
  display: flex;
  flex: none;
  flex-direction: column;
  padding: 5px 3px 0 4px;
  border-right: 2px solid transparent;
  border-image: linear-gradient(90deg, #b5b5b5 50%, #fafafa 50%) 0 2 0 0;
}

.g-datum { width: 66px; }

.g-sketch {
  width: 318px;
  padding-left: 3px;
  padding-right: 4px;
}

.g-basic {
  width: 171px;
  padding-right: 10px;
}

.g-bend { width: 155px; }
.g-list { width: 98px; }

.g-feature {
  width: 171px;
  padding-left: 10px;
}

.g-form { width: 146px; }
.g-flat { width: 59px; }

.group-body {
  display: flex;
  justify-content: space-between;
  height: 71px;
}

.g-datum .group-body, .g-flat .group-body {
  justify-content: center;
}

.group footer {
  display: flex;
  align-items: center;
  justify-content: center;
  position: relative;
  height: 20px;
  padding-right: 20px;
  color: #444;
}

.group footer .caret {
  position: absolute;
  right: 5px;
}

.g-basic footer {
  padding-right: 12px;
}

.g-basic footer .caret {
  right: 0;
}

.big {
  display: flex;
  flex-direction: column;
  align-items: center;
  min-width: 38px;
  white-space: nowrap;
}

.g-sketch .big {
  min-width: 48px;
}

.g-bend .big:first-child {
  min-width: 46px;
}

.g-bend .group-body {
  justify-content: flex-start;
  gap: 2px;
}

.g-bend .big:last-child {
  margin-left: auto;
}

.big > svg, .big > .frame {
  margin-bottom: 4px;
}

.big.two-line {
  display: block;
}

.big.two-line svg {
  margin: 0 auto 4px;
}

.big .caret {
  margin-top: 5px;
}

.frame {
  display: flex;
  flex: none;
  align-items: center;
  justify-content: center;
  width: 38px;
  height: 34px;
  margin-top: -1px;
  border: 1px solid #bcbcbc;
  border-radius: 3px;
}

.big > .frame {
  margin-bottom: 3px;
}

.gallery {
  display: flex;
  flex: 1;
  height: 69px;
  border: 1px solid #a9a9a9;
  background: #e5e5e5;
}

.gallery.wide {
  flex: none;
  width: 257px;
}

.gallery-items {
  flex: 1;
  min-width: 0;
}

.wide .gallery-items {
  display: flex;
  padding-right: 4px;
}

.shape {
  display: flex;
  flex: 1;
  flex-direction: column;
  align-items: center;
  justify-content: center;
  gap: 7px;
}

.row {
  display: flex;
  align-items: center;
  gap: 4px;
  height: 23px;
  padding: 0 0 3px 1px;
  white-space: nowrap;
}

.scroller {
  display: flex;
  flex: none;
  flex-direction: column;
  width: 16px;
  border-left: 1px solid #a9a9a9;
}

.scroller button {
  display: flex;
  flex: 1;
  flex-direction: column;
  align-items: center;
  justify-content: center;
  gap: 2px;
  background: linear-gradient(#ebebeb, #dadada);
}

.scroller button + button {
  border-top: 1px solid #a9a9a9;
}

.scroller .up {
  color: #bbb;
  background: #f0f0f0;
}

.scroller .up::after {
  transform: rotate(180deg);
}

/* selection toolbar */
.toolbar {
  display: flex;
  align-items: center;
  flex: none;
  height: 32px;
  padding: 0 0 2px 9px;
  border-bottom: 1px solid #b8b8b8;
  background: linear-gradient(#cfcfcf, #dadada 8px);
}

.menu-button {
  display: flex;
  align-items: center;
  white-space: nowrap;
}

.menu-button svg {
  margin-right: 4px;
}

.menu-button .caret {
  margin-left: 5px;
}

.tool-sep {
  width: 2px;
  height: 23px;
  margin: 0 11px 0 6px;
  border-left: 1px solid #b0b0b0;
  border-right: 1px solid #f6f6f6;
}

.view-sep {
  margin: 0 7px;
}

.combo {
  position: relative;
  height: 21px;
  margin-right: 10px;
}

.c-filter { width: 147px; }

.c-scope {
  width: 154px;
  margin-right: 5px;
}

.combo select {
  width: 100%;
  height: 100%;
  padding: 0 20px 0 2px;
  border: 2px solid #7b7b7b;
  border-right-color: #9aa;
  border-bottom-color: #aaa;
  border-radius: 3px;
  appearance: none;
  background: #fff;
  font: inherit;
  color: #000;
}

.combo::after {
  content: "";
  position: absolute;
  top: 1px;
  right: 1px;
  width: 17px;
  height: 19px;
  border: 1px solid #4777b0;
  border-radius: 2px;
  pointer-events: none;
  background: linear-gradient(#e2eefb, #9ecbf6 60%, #4fa8f0);
}

.combo::before {
  content: "";
  position: absolute;
  z-index: 1;
  top: 8px;
  right: 4px;
  border: 5px solid transparent;
  border-top: 6px solid #111;
  border-bottom: 0;
  pointer-events: none;
}

.tool {
  display: flex;
  align-items: center;
  justify-content: center;
  width: 23px;
  height: 23px;
  margin: 0 1px;
}

.tool.boxed {
  border: 1px solid #666;
  border-radius: 3px;
  background: #fff;
}

/* workspace */
.workspace {
  display: flex;
  flex: 1;
  min-height: 0;
}

.rail {
  display: flex;
  flex: none;
  flex-direction: column;
  align-items: flex-end;
  gap: 2px;
  width: 30px;
  border-right: 2px solid #7c7c7c;
  background: #a9a9a9;
}

.rail-label {
  width: 28px;
  height: 42px;
  padding: 7px 2px 0 0;
  font-size: 13px;
  text-align: center;
}

.rail button {
  display: flex;
  flex: none;
  align-items: center;
  justify-content: center;
  width: 25px;
  height: 40px;
  border: 1px solid #777;
  border-right: 0;
  border-radius: 3px 0 0 3px;
  background: #d6d6d6;
}

.rail .current {
  width: 29px;
  height: 43px;
  margin: -1px -2px -1px 0;
  background: #ebebeb;
}

.rail .gap {
  margin-top: 12px;
}

.navigator {
  display: flex;
  flex: none;
  flex-direction: column;
  width: 492px;
  padding: 0 8px 0 7px;
  border-top: 1px solid #808080;
  border-right: 2px solid #808080;
  background: #ebebeb;
}

.nav-title {
  display: flex;
  align-items: center;
  justify-content: space-between;
  height: 29px;
  padding: 0 5px 1px;
}

.nav-title h2 {
  margin: 0;
  font-size: 12px;
}

.nav-title button {
  width: 13px;
  height: 12px;
  border: 1px solid #000;
  border-top-width: 2px;
}

/* row stripes and column lines run to the bottom of the box */
.tree-box {
  flex: 1;
  min-height: 0;
  overflow: hidden;
  border: 1px solid #666;
  border-bottom: 0;
  background:
    linear-gradient(#e2e2e2, #e2e2e2) 199px 0 / 1px 100% no-repeat,
    linear-gradient(#e2e2e2, #e2e2e2) 299px 0 / 1px 100% no-repeat,
    linear-gradient(#e2e2e2, #e2e2e2) 399px 0 / 1px 100% no-repeat,
    repeating-linear-gradient(#fff 0 19px, #e2e2e2 19px 20px, #f7f7f7 20px 39px, #e2e2e2 39px 40px) 0 22px no-repeat;
}

.tree {
  width: 100%;
  border-collapse: collapse;
  table-layout: fixed;
}

.col-name { width: 200px; }
.col-state { width: 100px; }

.tree th {
  height: 22px;
  padding: 0 0 0 6px;
  border-right: 1px solid #aaa;
  border-bottom: 1px solid #858585;
  font-weight: 400;
  text-align: left;
  background: linear-gradient(#f2f3f3 50%, #dfe1e2 50%, #d4d6d7);
}

.tree th:last-child {
  border-right: 0;
}

.sort {
  display: inline-block;
  margin-left: 17px;
  border: 5px solid transparent;
  border-bottom: 5px solid #111;
  border-top: 0;
  vertical-align: 3px;
}

.tree td {
  height: 20px;
  padding: 0;
}

.ok {
  margin-left: 6px;
}

.node {
  position: relative;
  display: flex;
  align-items: center;
  gap: 3px;
  height: 20px;
  padding: 0 0 2px 5px;
  white-space: nowrap;
  color: #222;
}

.node > svg + svg {
  margin-left: -1px;
}

.node.child {
  gap: 2px;
  padding-left: 29px;
}

.node::before {
  content: "";
  position: absolute;
  top: 0;
  left: 9px;
  height: 20px;
  border-left: 1px dotted #999;
}

.node.child::before {
  left: 28px;
}

.node.last::before {
  height: 10px;
}

.node .link {
  width: 4px;
  margin: 0 -1px 0 -3px;
  border-top: 1px dotted #999;
}

.node.child .link {
  width: 10px;
  margin: 0;
}

.toggle {
  position: relative;
  width: 9px;
  height: 9px;
  border: 1px solid #777;
  border-radius: 2px;
  background: linear-gradient(#111, #111) center / 5px 1px no-repeat, #fff;
}

.toggle.plus {
  background: linear-gradient(#111, #111) center / 5px 1px no-repeat, linear-gradient(#111, #111) center / 1px 5px no-repeat, #fff;
}

.node input {
  width: 12px;
  height: 12px;
  margin: 0;
  border: 1px solid #000;
  appearance: none;
  background: #fff;
}

.node input:checked {
  background: #fff url("data:image/svg+xml,%3Csvg xmlns='http://www.w3.org/2000/svg' viewBox='0 0 10 10'%3E%3Cpath d='M1 5l3 3 5-7' fill='none' stroke='%2312c62a' stroke-width='2.5'/%3E%3C/svg%3E") center / 10px 10px no-repeat;
}

.node.dim {
  color: #a0a0a0;
}

.node.bold {
  font-weight: 700;
}

/* graphics window */
.graphics {
  display: flex;
  flex: 1;
  flex-direction: column;
  min-width: 0;
}

.doc-tabs {
  display: flex;
  flex: none;
  height: 22px;
  border-bottom: 2px solid #585858;
  background: #ebebeb;
}

.doc {
  display: flex;
  align-items: center;
  gap: 4px;
  padding: 0 22px 0 6px;
  color: #000;
}

.doc .flag {
  margin: 0 2px 0 5px;
}

.doc.open {
  padding: 0 7px;
  color: #f2f2f2;
  background: #585858;
}

.canvas {
  position: relative;
  flex: 1;
  overflow: hidden;
  background: linear-gradient(#b3b4b6, #e1e2e4);
}

.model {
  position: absolute;
  left: 318px;
  top: 163px;
}

.watermark {
  position: absolute;
  right: 5px;
  bottom: 3px;
  margin: 0;
  font-family: "Liberation Mono", monospace;
  font-size: 13px;
  color: #555;
  text-shadow: 1px 1px 0 #fff;
}

.watermark span {
  font-family: "Noto Sans CJK SC", sans-serif;
  font-size: 16px;
  font-weight: 300;
}
```
